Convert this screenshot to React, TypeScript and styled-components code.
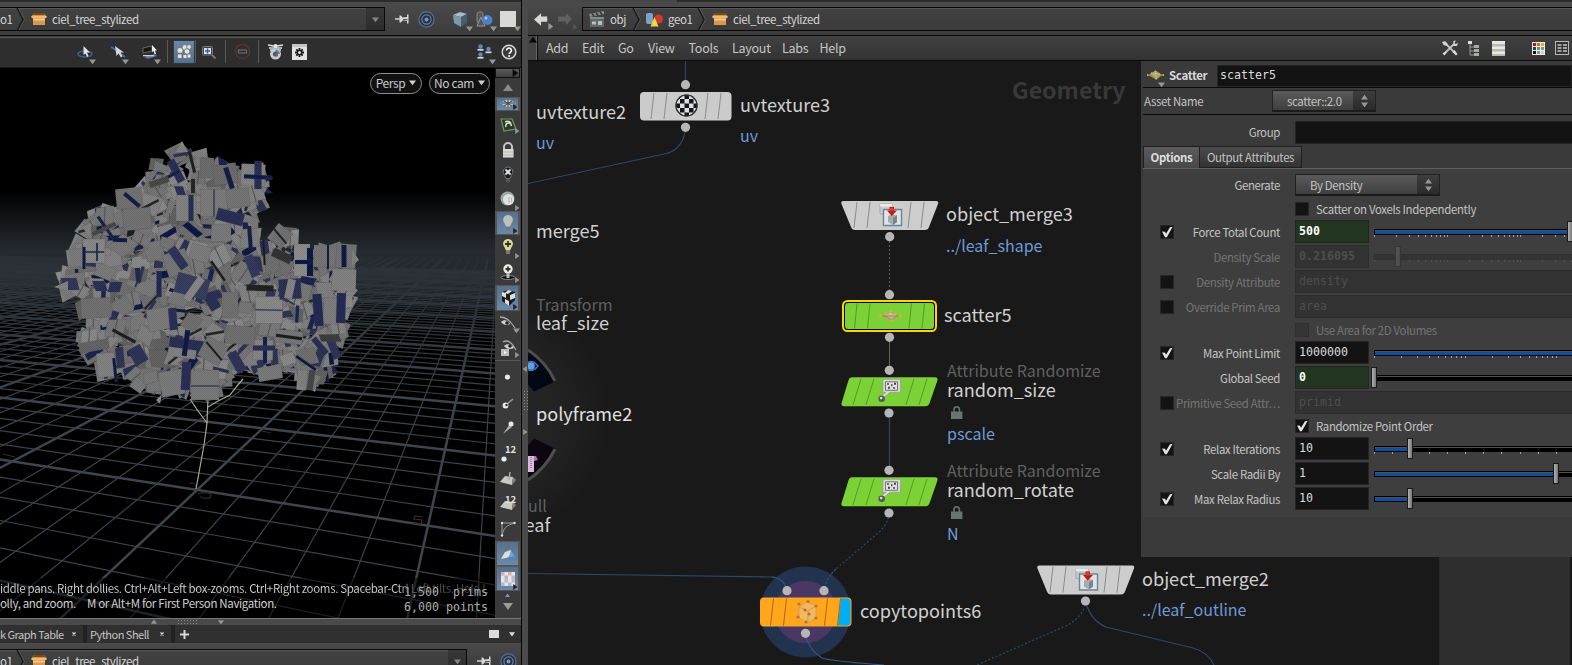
import React from "react";
import styled, { createGlobalStyle, css } from "styled-components";

const SANS = '"Noto Sans CJK SC", "Open Sans", sans-serif';
const MONO = '"DejaVu Sans Mono", "Liberation Mono", monospace';

const GlobalStyle = createGlobalStyle`
  * { box-sizing: border-box; }
  body { margin: 0; background: #3a3a3a; font-family: ${SANS}; font-size: 11.4px; letter-spacing: -0.33px; color: #c4c4c4; overflow: hidden; }
  svg { display: block; flex: none; }
`;

const Window = styled.div`
  width: 1572px;
  height: 665px;
  display: flex;
  overflow: hidden;
`;

/* ---------- shared chrome ---------- */

const TabStrip = styled.div<{ $from?: number }>`
  height: 2px;
  flex: none;
  background: #2b2b2b;
  margin-left: ${(p) => p.$from ?? 0}px;
`;

const PathBar = styled.div`
  height: 33px;
  flex: none;
  display: flex;
  align-items: center;
  padding-top: 1px;
  background: linear-gradient(#4a4a4a, #3c3c3c);
`;

const PathField = styled.div<{ $width?: number; $open?: boolean }>`
  height: 24px;
  display: flex;
  align-items: center;
  overflow: hidden;
  width: ${(p) => (p.$width ? `${p.$width}px` : "auto")};
  flex: ${(p) => (p.$width ? "none" : "1")};
  background: linear-gradient(#424242, #3b3b3b);
  border: 1px solid #080808;
  border-width: ${(p) => (p.$open ? "1px 0 1px 1px" : "1px 1px 1px 0")};
  box-shadow: inset 0 1px #555;
`;

const PathText = styled.span<{ $w?: number }>`
  line-height: 18px;
  margin-top: -1px;
  font-size: 11.500px;
  letter-spacing: -0.38px;
  color: #d6d6d6;
  white-space: nowrap;
  width: ${(p) => (p.$w ? `${p.$w}px` : "auto")};
`;

const FieldDrop = styled.div`
  width: 18px;
  height: 22px;
  margin-left: auto;
  display: grid;
  place-items: center;
  background: linear-gradient(#373737, #2c2c2c);
`;

const Chevron = () => (
  <svg width="9" height="23" viewBox="0 0 9 23">
    <path d="M1 0 7 11.500 1 23" fill="none" stroke="#151515" strokeWidth="1.3" />
    <path d="M2.500 0 8.500 11.500 2.500 23" fill="none" stroke="#5a5a5a" strokeWidth=".8" />
  </svg>
);

const Tri = ({ dir = "down", c = "#969696", s = 6 }: { dir?: string; c?: string; s?: number }) => {
  const rot: Record<string, number> = { down: 0, left: 90, up: 180, right: 270 };
  return (
    <svg width={s} height={s} viewBox="0 0 10 10">
      <path d="M0 2h10L5 9z" fill={c} transform={`rotate(${rot[dir]} 5 5)`} />
    </svg>
  );
};

const BoxIcon = () => (
  <svg width="16" height="14" viewBox="0 0 16 14">
    <path d="M3 1h10l3 4-2 1v7H2V6L0 5z" fill="#d9994a" />
    <path d="M3 1h10l1.500 2.500h-13z" fill="#7a4a12" />
    <path d="M2 7h12v1.500H2z" fill="#f4c987" />
    <path d="M0 5l2-1.500h12L16 5l-2 1.500H2z" fill="#edbb72" />
  </svg>
);

const PinIcon = () => (
  <svg width="15" height="14" viewBox="0 0 15 14">
    <path d="M0 7h6" stroke="#dcdcdc" strokeWidth="1.400" />
    <path d="M4.500 3.500h1.500l1.500 2 4.500-.5V2.500h1.500v9H12V9L7.500 8.500 6 10.500H4.500z" fill="#d8d8d8" />
    <path d="M8 7h4.500v1.200H8z" fill="#555" />
  </svg>
);

const TargetIcon = () => (
  <svg width="17" height="17" viewBox="0 0 17 17">
    <circle cx="8.500" cy="8.500" r="7.600" fill="#2c333f" stroke="#56719d" strokeWidth="1.200" />
    <circle cx="8.500" cy="8.500" r="4.600" fill="none" stroke="#6080ae" strokeWidth="1.200" />
    <circle cx="8.500" cy="8.500" r="1.900" fill="#7399d2" />
  </svg>
);

const IconSlot = styled.div<{ $w?: number; $h?: number; $lit?: boolean; $ml?: number }>`
  position: relative;
  width: ${(p) => p.$w ?? 24}px;
  height: ${(p) => p.$h ?? 24}px;
  margin-left: ${(p) => p.$ml ?? 0}px;
  flex: none;
  display: grid;
  place-items: center;
  ${(p) =>
    p.$lit &&
    css`
      background: linear-gradient(#6a87a6, #52718f);
      border: 1px solid #31363c;
    `}
`;

const Corner = styled.span<{ $x?: number; $y?: number }>`
  position: absolute;
  right: ${(p) => p.$x ?? 0}px;
  bottom: ${(p) => p.$y ?? 0}px;
`;

/* ---------- left pane ---------- */

const LeftPane = styled.div`
  width: 521px;
  flex: none;
  display: flex;
  flex-direction: column;
  background: #3a3a3a;
`;

const ViewToolbar = styled.div`
  height: 33px;
  flex: none;
  display: flex;
  align-items: center;
  padding-left: 73px;
  background: #2e2e2e;
  border-top: 1px solid #0c0c0c;
  border-bottom: 1px solid #1b1b1b;
  box-shadow: inset 0 1px #3a3a3a, inset 0 2px #5a5a5a;
`;

const Divider = styled.div<{ $ml: number; $mr: number }>`
  width: 1px;
  height: 23px;
  background: #5a5a5a;
  margin: 0 ${(p) => p.$mr}px 0 ${(p) => p.$ml}px;
`;

const ViewRow = styled.div`
  display: flex;
  height: 550px;
  flex: none;
`;

const Viewport = styled.div`
  position: relative;
  width: 495px;
  height: 550px;
  background: #000;
  overflow: hidden;
`;

const CameraPills = styled.div`
  position: absolute;
  top: 5px;
  right: 5px;
  display: flex;
  gap: 7px;
`;

const Pill = styled.div<{ $w: number }>`
  width: ${(p) => p.$w}px;
  height: 21px;
  padding-bottom: 2px;
  border: 1.500px solid #8e8e8e;
  border-radius: 11px;
  background: #111;
  display: flex;
  align-items: center;
  justify-content: center;
  gap: 4px;
  font-size: 12px;
  letter-spacing: -0.4px;
  line-height: 18px;
  white-space: nowrap;
  color: #c8c8c8;
`;

const HelpBand = styled.div`
  position: absolute;
  left: 0;
  right: 0;
  bottom: 0;
  height: 40px;
  background: rgba(0, 0, 0, 0.5);
  padding-top: 3px;
`;

const HelpLine = styled.div<{ $fade?: boolean }>`
  height: 15px;
  line-height: 15px;
  font-size: 11.500px;
  letter-spacing: -0.35px;
  white-space: pre;
  width: 488px;
  overflow: hidden;
  color: ${(p) => (p.$fade ? "transparent" : "#cfcfcf")};
  ${(p) =>
    p.$fade &&
    css`
      background: linear-gradient(90deg, #cfcfcf 398px, #555 410px, #3d3d3d);
      background-clip: text;
    `}
`;

const Stats = styled.div`
  position: absolute;
  right: 7px;
  bottom: 3px;
  text-align: right;
  font-family: ${MONO};
  font-size: 11.640px;
  line-height: 15px;
  letter-spacing: 0;
  color: #acacac;
  white-space: pre;
`;

const SideBar = styled.div`
  width: 26px;
  height: 550px;
  display: flex;
  flex-direction: column;
  align-items: stretch;
  background: #3a3a3a;
  border-right: 1px solid #444;
`;

const SideHead = styled.div`
  height: 10px;
  flex: none;
  display: flex;
  justify-content: flex-end;
  background: linear-gradient(#5c5c5c, #3e3e3e);
  border: 1px solid #111;
`;

const SideCell = styled.div<{ $h: number; $lit?: boolean; $line?: boolean }>`
  position: relative;
  height: ${(p) => p.$h}px;
  flex: none;
  display: grid;
  place-items: center;
  overflow: hidden;
  border-bottom: ${(p) => (p.$line ? "1px solid #585858" : "0")};
  ${(p) =>
    p.$lit &&
    css`
      border: 1px solid #555;
      border-width: 1px 2px 1px 2px;
      background: linear-gradient(#56708c, #6a89a8);
    `}
`;

const SplitH = styled.div`
  height: 7px;
  flex: none;
  background: #4a4a4a;
  border-top: 1px solid #777;
  display: flex;
  align-items: center;
  padding-left: 151px;
  gap: 20px;
`;

const Grip = styled.div<{ $w: number; $h: number }>`
  width: ${(p) => p.$w}px;
  height: ${(p) => p.$h}px;
  flex: none;
  background: radial-gradient(circle, #8a8a8a 0.8px, transparent 1px) 0 0 / 3px 3px;
`;

const TabBar = styled.div`
  height: 18px;
  flex: none;
  display: flex;
  align-items: center;
  background: #303030;
`;

const PaneTab = styled.div<{ $w: number; $pl: number; $pr: number }>`
  width: ${(p) => p.$w}px;
  height: 18px;
  padding: 0 ${(p) => p.$pr}px 0 ${(p) => p.$pl}px;
  display: flex;
  align-items: center;
  justify-content: space-between;
  font-size: 11px;
  letter-spacing: -0.5px;
  line-height: 18px;
  white-space: nowrap;
  border-right: 4px solid #222;
`;

const TabTail = styled.div`
  flex: 1;
  display: flex;
  align-items: center;
  justify-content: space-between;
  padding: 0 6px 0 5px;
`;

const TabTools = styled.div`
  display: flex;
  align-items: center;
  gap: 10px;
`;

const LowerPath = styled(PathBar)`
  height: 23px;
  align-items: flex-start;
  padding-top: 6px;
`;

/* Pseudo random generator so the foliage is identical on every render. */
const makeRandom = (seed: number) => () => {
  seed = (seed * 1664525 + 1013904223) % 4294967296;
  return seed / 4294967296;
};

const CROWN: [number, number][] = [
  [182, 145], [197, 150], [240, 160], [262, 162], [272, 176], [268, 200], [261, 212], [257, 237], [270, 240],
  [283, 224], [300, 238], [312, 245], [355, 244], [358, 275], [352, 310], [345, 350], [338, 370], [317, 390],
  [300, 388], [296, 374], [270, 382], [255, 382], [240, 376], [225, 384], [218, 400], [178, 402], [160, 396],
  [133, 396], [128, 378], [97, 379], [95, 363], [81, 360], [74, 330], [73, 310], [63, 296], [57, 286], [63, 274],
  [71, 262], [68, 252], [78, 238], [80, 225], [97, 208], [111, 206], [116, 190], [141, 188], [144, 168], [157, 149],
];

const inside = (x: number, y: number) => {
  let hit = false;
  for (let i = 0, j = CROWN.length - 1; i < CROWN.length; j = i++) {
    const [xi, yi] = CROWN[i];
    const [xj, yj] = CROWN[j];
    if (yi > y !== yj > y && x < ((xj - xi) * (y - yi)) / (yj - yi) + xi) hit = !hit;
  }
  return hit;
};

const GREYS = ["#787878", "#7d7d7d", "#828282", "#868686", "#727272", "#7a7a7a", "#8c8c8c", "#646464"];
const NAVY = ["#1b2552", "#2c3158", "#0e1a45", "#303459"];

interface Card { cx: number; cy: number; w: number; h: number; a: number; fill: string; k?: number }

const buildCards = (): Card[] => {
  const rnd = makeRandom(77);
  const out: Card[] = [];
  while (out.length < 1300) {
    const x = 55 + rnd() * 305;
    const y = 142 + rnd() * 262;
    const ok = [[8, 0], [-8, 0], [0, 8], [0, -8]].every(([dx, dy]) => inside(x + dx, y + dy));
    if (!ok) continue;
    const a = (rnd() - 0.5) * 70;
    const s = 13 + rnd() * 8;
    const k = (rnd() - 0.5) * 36;
    out.push({ cx: x, cy: y, w: s, h: s * (0.7 + rnd() * 0.35), a, k, fill: GREYS[Math.floor(rnd() * 8)] });
    const r = rnd();
    if (r < 0.3) out.push({ cx: x + 2, cy: y, w: 3 + rnd() * 6, h: s * (0.7 + rnd() * 0.4), a: a + (r < 0.12 ? 90 : 0), k: k * 1.4, fill: NAVY[Math.floor(rnd() * 4)] });
    else if (r < 0.35) out.push({ cx: x, cy: y, w: 2.5, h: s, a: a + 45, fill: "#262626" });
    else if (r < 0.6) out.push({ cx: x, cy: y, w: 0.8, h: s, a, k, fill: "#595959" });
  }
  return out;
};

const CARDS = buildCards();

/* Foreground leaf cards, which face the camera. */
const FRONT: Card[] = [
  { cx: 186, cy: 208, w: 20, h: 26, a: 0, fill: "#848484" }, { cx: 191, cy: 208, w: 5, h: 26, a: 0, fill: "#282f58" },
  { cx: 214, cy: 203, w: 27, h: 27, a: 0, fill: "#7e7e7e" }, { cx: 214, cy: 203, w: 1.2, h: 27, a: 0, fill: "#2c3158" },
  { cx: 238, cy: 198, w: 23, h: 19, a: -6, fill: "#777" }, { cx: 230, cy: 217, w: 27, h: 12, a: 15, fill: "#2b3058" },
  { cx: 207, cy: 168, w: 14, h: 20, a: 0, fill: "#6f6f6f" }, { cx: 192, cy: 162, w: 3, h: 22, a: -14, fill: "#1f1f1f" },
  { cx: 193, cy: 186, w: 4, h: 14, a: 0, fill: "#262626" }, { cx: 176, cy: 171, w: 8, h: 24, a: -28, fill: "#2b3058" },
  { cx: 170, cy: 176, w: 22, h: 3, a: -28, fill: "#141f4c" }, { cx: 159, cy: 182, w: 20, h: 6, a: -18, fill: "#4c4c46" },
  { cx: 253, cy: 175, w: 24, h: 22, a: 3, fill: "#878787" }, { cx: 258, cy: 175, w: 7, h: 28, a: 0, fill: "#292f58" },
  { cx: 258, cy: 177, w: 28, h: 4, a: 3, fill: "#101c4a" }, { cx: 225, cy: 174, w: 24, h: 20, a: -8, fill: "#6e6e6e" },
  { cx: 229, cy: 178, w: 5, h: 22, a: -18, fill: "#121d49" }, { cx: 129, cy: 198, w: 26, h: 20, a: -6, fill: "#747474" },
  { cx: 132, cy: 200, w: 4, h: 20, a: -50, fill: "#131e4c" }, { cx: 137, cy: 219, w: 28, h: 21, a: -6, fill: "#757575" },
  { cx: 94, cy: 251, w: 22, h: 24, a: 0, fill: "#8b8b8b" }, { cx: 97, cy: 252, w: 1.6, h: 18, a: 0, fill: "#101c4a" },
  { cx: 93, cy: 252, w: 22, h: 1.4, a: 0, fill: "#101c4a" }, { cx: 106, cy: 228, w: 3, h: 28, a: -35, fill: "#17224e" },
  { cx: 104, cy: 229, w: 25, h: 4, a: -25, fill: "#4a4a4a" }, { cx: 76, cy: 258, w: 18, h: 18, a: -8, fill: "#7e7e7e" },
  { cx: 84, cy: 258, w: 3, h: 22, a: 0, fill: "#101b46" }, { cx: 120, cy: 240, w: 14, h: 4, a: 2, fill: "#101b46" },
  { cx: 70, cy: 284, w: 16, h: 12, a: 0, k: 14, fill: "#34385c" }, { cx: 100, cy: 286, w: 12, h: 10, a: 0, k: 20, fill: "#2d3258" },
  { cx: 115, cy: 287, w: 12, h: 10, a: 0, k: -14, fill: "#2d3258" }, { cx: 138, cy: 275, w: 5, h: 14, a: -6, fill: "#222a54" },
  { cx: 159, cy: 284, w: 5, h: 26, a: 0, fill: "#232a55" }, { cx: 150, cy: 309, w: 3, h: 20, a: 32, fill: "#2d3258" },
  { cx: 96, cy: 308, w: 30, h: 20, a: -3, fill: "#737373" }, { cx: 94, cy: 346, w: 30, h: 10, a: -10, fill: "#666" },
  { cx: 200, cy: 253, w: 20, h: 16, a: 15, fill: "#7f7f7f" }, { cx: 177, cy: 263, w: 24, h: 24, a: -18, fill: "#797979" },
  { cx: 178, cy: 258, w: 9, h: 24, a: -35, fill: "#30345c" }, { cx: 192, cy: 286, w: 33, h: 20, a: 15, fill: "#3a3e60" },
  { cx: 194, cy: 289, w: 8, h: 27, a: 35, fill: "#8a8a8a" }, { cx: 252, cy: 266, w: 9, h: 22, a: -22, fill: "#343a60" },
  { cx: 218, cy: 271, w: 2.500, h: 24, a: -35, fill: "#1e1e1e" }, { cx: 213, cy: 303, w: 11, h: 14, a: -30, fill: "#2a3058" },
  { cx: 260, cy: 288, w: 27, h: 6, a: 2, fill: "#232323" }, { cx: 269, cy: 310, w: 27, h: 27, a: 0, fill: "#8c8c8c" },
  { cx: 269, cy: 310, w: 27, h: 1.2, a: 1, fill: "#1c2858" }, { cx: 290, cy: 289, w: 22, h: 20, a: -4, fill: "#2d3258" },
  { cx: 290, cy: 289, w: 8, h: 20, a: 12, fill: "#888" }, { cx: 328, cy: 256, w: 28, h: 22, a: 0, fill: "#787878" },
  { cx: 346, cy: 256, w: 20, h: 24, a: 4, fill: "#767676" }, { cx: 344, cy: 256, w: 5, h: 22, a: 0, fill: "#101b46" },
  { cx: 328, cy: 257, w: 2, h: 24, a: 0, fill: "#101b46" }, { cx: 302, cy: 260, w: 16, h: 32, a: 0, fill: "#909090" },
  { cx: 310, cy: 262, w: 6, h: 28, a: 0, fill: "#0c1946" }, { cx: 303, cy: 262, w: 16, h: 4, a: 0, fill: "#0c1946" },
  { cx: 331, cy: 311, w: 15, h: 26, a: 2, fill: "#808080" }, { cx: 341, cy: 308, w: 9, h: 30, a: 2, fill: "#252c58" },
  { cx: 318, cy: 310, w: 9, h: 32, a: -4, fill: "#242b56" }, { cx: 344, cy: 280, w: 24, h: 22, a: 2, fill: "#858585" },
  { cx: 250, cy: 238, w: 4, h: 24, a: -4, fill: "#141f4c" }, { cx: 264, cy: 252, w: 2, h: 26, a: -3, fill: "#1c1c1c" },
  { cx: 280, cy: 236, w: 18, h: 19, a: 38, fill: "#737373" }, { cx: 280, cy: 236, w: 2, h: 20, a: -40, fill: "#222" },
  { cx: 282, cy: 256, w: 20, h: 9, a: 25, fill: "#343434" }, { cx: 160, cy: 319, w: 25, h: 22, a: -10, fill: "#7e7e7e" },
  { cx: 173, cy: 319, w: 8, h: 22, a: -5, fill: "#2b3058" }, { cx: 186, cy: 347, w: 34, h: 16, a: 8, fill: "#2a3056" },
  { cx: 182, cy: 353, w: 28, h: 9, a: 8, fill: "#858585" }, { cx: 186, cy: 343, w: 5, h: 26, a: 8, fill: "#101b46" },
  { cx: 138, cy: 355, w: 14, h: 18, a: -30, fill: "#30345a" }, { cx: 124, cy: 336, w: 26, h: 3, a: 28, fill: "#1d1d1d" },
  { cx: 213, cy: 351, w: 24, h: 22, a: 28, fill: "#767676" }, { cx: 214, cy: 351, w: 2, h: 24, a: -40, fill: "#1e1e1e" },
  { cx: 205, cy: 385, w: 28, h: 30, a: 0, fill: "#7c7c7c" }, { cx: 205, cy: 386, w: 28, h: 1.2, a: 0, fill: "#2b3465" },
  { cx: 172, cy: 383, w: 24, h: 25, a: -10, fill: "#7d7d7d" }, { cx: 186, cy: 376, w: 9, h: 28, a: 3, fill: "#2b2f58" },
  { cx: 106, cy: 365, w: 18, h: 24, a: -4, fill: "#858585" }, { cx: 115, cy: 370, w: 3, h: 24, a: -6, fill: "#101b46" },
  { cx: 302, cy: 380, w: 10, h: 20, a: 4, fill: "#838383" }, { cx: 311, cy: 380, w: 6, h: 20, a: 8, fill: "#484848" },
  { cx: 306, cy: 363, w: 24, h: 3, a: 35, fill: "#101b46" }, { cx: 320, cy: 346, w: 6, h: 20, a: -40, fill: "#2b3058" },
  { cx: 334, cy: 349, w: 8, h: 20, a: -22, fill: "#30345a" }, { cx: 330, cy: 338, w: 20, h: 7, a: 0, k: 20, fill: "#3e3e3e" },
  { cx: 237, cy: 362, w: 10, h: 22, a: -30, fill: "#30345a" },
  { cx: 263, cy: 350, w: 20, h: 20, a: 2, fill: "#888" }, { cx: 265, cy: 350, w: 4, h: 26, a: 0, fill: "#13204f" },
  { cx: 264, cy: 348, w: 22, h: 5, a: 0, fill: "#2b3058" }, { cx: 289, cy: 337, w: 27, h: 13, a: 6, fill: "#7a7a7a" },
  { cx: 289, cy: 337, w: 26, h: 3, a: 8, fill: "#1b1b1b" }, { cx: 270, cy: 373, w: 24, h: 14, a: -10, fill: "#7c7c7c" },
  { cx: 240, cy: 335, w: 30, h: 18, a: 4, fill: "#727272" }, { cx: 230, cy: 305, w: 16, h: 26, a: 0, fill: "#747474" },
];

const gridLines = () => {
  const hx = 500, hy = 205, vx = -1650;
  const lines: { x1: number; y1: number; x2: number; y2: number; major: boolean }[] = [];
  for (let k = -60; k <= 40; k++) {
    const x = 197 + 47.8 * k;
    const t1 = (258 - hy) / 285;
    const t2 = (625 - hy) / 285;
    lines.push({ x1: hx + (x - hx) * t1, y1: 258, x2: hx + (x - hx) * t2, y2: 625, major: k % 5 === 0 });
  }
  for (let k = -9; k <= 62; k++) {
    const u = 1 / (0.003509 + 0.000194 * k);
    const px = hx - 1.063 * u;
    const m = u / (px - vx);
    lines.push({ x1: 0, y1: hy + m * -vx, x2: 495, y2: hy + m * (495 - vx), major: k % 5 === 0 });
  }
  return lines;
};

const GRID = gridLines();

const Scene = () => (
  <svg width="495" height="550" viewBox="0 68 495 550">
    <defs>
      <linearGradient id="haze" x1="0" y1="0" x2="0" y2="1">
        <stop offset="0" stopColor="#2b3036" stopOpacity="0" />
        <stop offset=".5" stopColor="#2b3036" stopOpacity=".9" />
        <stop offset=".65" stopColor="#2b3036" stopOpacity=".85" />
        <stop offset="1" stopColor="#2b3036" stopOpacity="0" />
      </linearGradient>
      <linearGradient id="fade" x1="0" y1="255" x2="0" y2="400" gradientUnits="userSpaceOnUse">
        <stop offset="0" stopColor="#fff" stopOpacity=".15" />
        <stop offset=".3" stopColor="#fff" stopOpacity=".7" />
        <stop offset="1" stopColor="#fff" />
      </linearGradient>
      <mask id="gridMask" maskUnits="userSpaceOnUse" x="0" y="255" width="495" height="365">
        <rect x="0" y="255" width="495" height="365" fill="url(#fade)" />
      </mask>
      <pattern id="weave" width="2" height="2" patternUnits="userSpaceOnUse">
        <rect width="1" height="1" fill="#000" opacity=".1" />
        <rect x="1" y="1" width="1" height="1" fill="#000" opacity=".1" />
      </pattern>
    </defs>
    <rect x="0" y="190" width="495" height="125" fill="url(#haze)" />
    <g mask="url(#gridMask)">
      {GRID.map((l, i) => (
        <line key={i} x1={l.x1} y1={l.y1} x2={l.x2} y2={l.y2} stroke={l.major ? "#3d464f" : "#3b434b"} strokeWidth={l.major ? 2.5 : 1.2} />
      ))}
    </g>
    <g fill="none" stroke="#a9a996" strokeWidth="1.200">
      <path d="M196 489 204 445 207 423 208 398" />
      <path d="M207 423 198 411 190 399" />
      <path d="M208 407 218 401 230 395 237 386 243 379" />
    </g>
    <path d="M189 484c3-3 8 0 6 3M262 431l9 2" stroke="#3a2a2a" fill="none" />
    <path d="M198 494c5-2 14-2 13 2s-10 2-11 0" stroke="#23232c" fill="none" strokeWidth="1.500" />
    <path d="M423 517l-8-1-1 3 8 1-1 4-8-1M3 454l12 3" stroke="#3c2a2b" fill="none" strokeWidth="1.200" />
    <g>
      {[...CARDS, ...FRONT].map((c, i) => (
        <rect
          key={i}
          x={-c.w / 2}
          y={-c.h / 2}
          width={c.w}
          height={c.h}
          fill={c.fill}
          stroke="#4b4b4b"
          strokeOpacity=".4"
          strokeWidth=".5"
          transform={`translate(${c.cx} ${c.cy}) rotate(${c.a}) skewX(${c.k ?? 0})`}
        />
      ))}
    </g>
    <g fill="#858585">
      <path d="M176 152 182 141 188 152zM54 287 68 281 68 291zM352 250 359 260 352 266zM156 400 160 404 162 394z" />
    </g>
    <path d="M218 155l9 10-8 0zM265 176l9 2-8 4zM267 188l6 5-8 1z" fill="#1a2552" />
    <clipPath id="crown"><polygon points={CROWN.map((p) => p.join(",")).join(" ")} /></clipPath>
    <rect x="50" y="140" width="312" height="266" fill="url(#weave)" clipPath="url(#crown)" />
  </svg>
);

const ViewTools = () => (
  <ViewToolbar>
    <IconSlot>
      <svg width="18" height="18" viewBox="0 0 18 18">
        <ellipse cx="9" cy="11" rx="7" ry="3" fill="none" stroke="#3f5f90" strokeWidth="1.600" />
        <path d="M7.500 3v9l2-1.500 1.500 3.500 1.500-1-1.500-3.500H14z" fill="#e0e0e0" />
      </svg>
      <Corner $x={1} $y={-1}><Tri s={7} /></Corner>
    </IconSlot>
    <IconSlot $ml={9}>
      <svg width="18" height="18" viewBox="0 0 18 18">
        <path d="M2 4l5 3 5 4 4 3" fill="none" stroke="#456ba5" strokeWidth="2" />
        <path d="M6 3l1.500 10 2-2.500 2.500 4 1.500-1-2-4H15z" fill="#d6d6d6" />
      </svg>
      <Corner $x={1} $y={-1}><Tri s={7} /></Corner>
    </IconSlot>
    <IconSlot $ml={8}>
      <svg width="18" height="18" viewBox="0 0 18 18">
        <path d="M2 5l9-2v5L2 10z" fill="#171717" stroke="#777" strokeWidth=".8" />
        <path d="M3 14l11-3 2 2-9 3z" fill="#4f76ad" />
        <path d="M2 12h11v1.300H2z" fill="#ccc" />
        <path d="M11 2v7l1.500-1 1 3h1.500l-1-3.500h2z" fill="#eee" />
      </svg>
      <Corner $x={1} $y={-1}><Tri s={7} /></Corner>
    </IconSlot>
    <Divider $ml={5} $mr={5} />
    <IconSlot $w={22} $lit>
      <svg width="16" height="18" viewBox="0 0 16 18" fill="#e4e4dc" stroke="#5a6470" strokeWidth=".7">
        <circle cx="9" cy="4.500" r="2.900" /><circle cx="13" cy="4" r="2.400" /><circle cx="4" cy="7.500" r="3" />
        <circle cx="11" cy="8.500" r="2.800" /><path d="M1.500 11h4.500v4.500H1.500zM7 11.500h4v4H7z" /><circle cx="13" cy="13" r="2.200" />
      </svg>
    </IconSlot>
    <Divider $ml={0} $mr={0} />
    <IconSlot $ml={1}>
      <svg width="16" height="14" viewBox="0 0 16 14">
        <rect x="1.500" y="1.500" width="10" height="8.500" rx="1" fill="#40444c" stroke="#777" />
        <path d="M3 3h7v6H3z" fill="#d4dff2" />
        <path d="M6.500 3.500v5M4 6h5" stroke="#35599b" strokeWidth="1.300" />
        <path d="M11 10l3.500 3.500" stroke="#777" strokeWidth="1.800" />
      </svg>
    </IconSlot>
    <Divider $ml={4} $mr={4} />
    <IconSlot>
      <svg width="17" height="17" viewBox="0 0 17 17">
        <circle cx="8.500" cy="8.500" r="7.100" fill="none" stroke="#5a3331" strokeWidth="1.500" />
        <rect x="4.500" y="7" width="8" height="3" fill="none" stroke="#707070" strokeWidth="1.100" />
      </svg>
    </IconSlot>
    <Divider $ml={4} $mr={4} />
    <IconSlot>
      <svg width="17" height="17" viewBox="0 0 17 17">
        <path d="M1 2l6 1M16 2l-6 1M2 5h13M3 7l11 0" stroke="#ddd" strokeWidth="1.300" />
        <circle cx="8.500" cy="3" r="2" fill="#e6e6e6" />
        <circle cx="8.500" cy="11" r="5.500" fill="#c8cecf" />
        <path d="M8.500 11V6.500a4.500 4.500 0 014.500 4.500z" fill="#5b8fae" />
        <circle cx="8.500" cy="11" r="2.600" fill="#36628c" /><circle cx="9.500" cy="12" r="1.500" fill="#bb4a3c" />
      </svg>
    </IconSlot>
    <IconSlot>
      <svg width="15" height="16" viewBox="0 0 15 16">
        <path d="M0 0h15v16H0z" fill="#e2e2e2" /><path d="M0 0h15v3H0z" fill="#c5c5c5" />
        <path d="M7.500 4v9M3 8.500h9M4.300 5.300l6.400 6.400M10.700 5.300l-6.400 6.400" stroke="#141414" strokeWidth="1.800" />
        <circle cx="7.500" cy="8.500" r="1.500" fill="#e2e2e2" />
      </svg>
    </IconSlot>
    <IconSlot $ml={162}>
      <svg width="16" height="16" viewBox="0 0 16 16">
        {[[3, 2.5], [11, 5], [3, 10.5]].map(([x, y]) => (
          <g key={`${x}${y}`}>
            <circle cx={x + 0.5} cy={y} r="2.200" fill="#5d86c6" />
            <path d={`M${x - 2.5} ${y + 3.3}h6`} stroke="#c9d4e6" strokeWidth="1.800" />
          </g>
        ))}
      </svg>
      <Corner $x={1} $y={-1}><Tri s={7} /></Corner>
    </IconSlot>
    <IconSlot>
      <svg width="16" height="16" viewBox="0 0 16 16">
        <circle cx="8" cy="8" r="6.800" fill="#3a3a3a" stroke="#d8d8d8" strokeWidth="1.500" />
        <path d="M5.600 6.400a2.400 2.400 0 114 1.800c-1 .7-1.500 1-1.500 1.900" fill="none" stroke="#fff" strokeWidth="1.600" />
        <circle cx="8.100" cy="12" r="1" fill="#fff" />
      </svg>
    </IconSlot>
  </ViewToolbar>
);

const Bulb = ({ c, mark, neck = "#777" }: { c: string; mark?: string; neck?: string }) => (
  <svg width="12" height="18" viewBox="0 0 12 18">
    <path d="M6 1a4.800 4.800 0 013.600 8L8 12.500H4L2.400 9A4.800 4.800 0 016 1z" fill={c} stroke={mark === "x" ? "#6b7275" : "none"} />
    <path d="M4 13h4v3H4z" fill={neck} />
    {mark === "plus" && <path d="M6 3v6M3 6h6" stroke="#333" strokeWidth="1.800" />}
    {mark === "x" && <path d="M3.500 3.500l5 5M8.500 3.500l-5 5" stroke="#e8e8e8" strokeWidth="1.800" />}
  </svg>
);

const PlaneGlyph = () => (
  <>
    <path d="M6 6l8 1-1 8L1 12z" fill="#c9c9c4" /><path d="M14 7l3 3-4 5z" fill="#85857f" />
  </>
);

const S: React.FC<{ children: React.ReactNode }> = ({ children }) => (
  <svg width="18" height="18" viewBox="0 0 18 18">{children}</svg>
);

const NumMark = styled.span`
  position: absolute;
  top: 3px;
  left: 10px;
  font-size: 9.500px;
  line-height: 10px;
  letter-spacing: 0;
  font-weight: 700;
  color: #e0e0e0;
`;

const Side = () => (
  <SideBar>
    <SideHead><Tri dir="right" c="#080808" s={8} /></SideHead>
    <SideCell $h={19}><Tri dir="up" s={10} c="#8a8a8a" /></SideCell>
    <SideCell $h={14} $lit>
      <svg width="16" height="10" viewBox="0 0 16 10">
        <path d="M8 0l8 4-8 5-8-5z" fill="#b9c0c2" /><path d="M4 2l8 5M12 2L4 7M8 0v9M1 4h14" stroke="#444" />
      </svg>
      <Corner $y={0}><Tri dir="right" s={6} c="#222" /></Corner>
    </SideCell>
    <SideCell $h={26}>
      <S><path d="M2 4h11l4 10-12 2z" fill="#2a3a26" stroke="#6f9b5a" strokeWidth="1.200" /><path d="M6 7q3-2 6 1M7 12q-1-4 3-4 3 1 2 3" fill="none" stroke="#dcdcdc" strokeWidth="1.500" /></S>
      <Corner $y={3}><Tri dir="right" s={6} /></Corner>
    </SideCell>
    <SideCell $h={25}>
      <S><path d="M5 9V6a4 4 0 018 0V9" fill="none" stroke="#c6c6c6" strokeWidth="2" /><path d="M4 8h10.500v8.500H4z" fill="#deded8" /><path d="M4 11h10.500M4 14h10.500" stroke="#b5b5ae" /></S>
    </SideCell>
    <SideCell $h={25}><Bulb c="#1b1e20" mark="x" neck="#555" /></SideCell>
    <SideCell $h={24}>
      <S><circle cx="8.500" cy="8.500" r="7" fill="#9ba5a5" /><circle cx="9.500" cy="9.500" r="5.500" fill="#e0e3df" /><path d="M10 7v6M12.500 7.500v5" stroke="#b5baba" strokeWidth="1.200" /></S>
      <Corner $y={0}><Tri dir="right" s={6} /></Corner>
    </SideCell>
    <SideCell $h={24} $lit><Bulb c="#bfc0bc" /><Corner $y={0}><Tri dir="right" s={6} c="#222" /></Corner></SideCell>
    <SideCell $h={24}><Bulb c="#d8dc8e" mark="plus" /><Corner $y={0}><Tri dir="right" s={6} /></Corner></SideCell>
    <SideCell $h={26}>
      <S><ellipse cx="9" cy="14.500" rx="7" ry="2" fill="#111" stroke="#888" /><circle cx="9" cy="6" r="4.700" fill="#eceee0" /><path d="M9 3.500v5M6.500 6h5" stroke="#333" strokeWidth="1.800" /><path d="M7.500 10h3v5h-3z" fill="#bbb" /></S>
      <Corner $y={2}><Tri dir="right" s={6} /></Corner>
    </SideCell>
    <SideCell $h={26} $lit>
      <S><path d="M3 3l6-2 7 2v8l-6 6-7-5z" fill="#1c1c1c" /><path d="M3 3l4 1v5l-4-2zM9 1l4 1-4 3-3-1zM11 6l5-2v5l-5 2zM6 10l4 2v5l-4-3z" fill="#dedede" /></S>
      <Corner $y={0}><Tri dir="right" s={6} c="#222" /></Corner>
    </SideCell>
    <SideCell $h={24}>
      <S><path d="M1 3c5 0 9 2 15 11" fill="none" stroke="#a9a9a9" strokeWidth="1.300" /><path d="M2 8c3-3 7-2 9 2-3 2-7 1-9-2z" fill="#d0d0d0" /><circle cx="8" cy="9" r="1.800" fill="#222" /></S>
      <Corner $y={1}><Tri s={7} /></Corner>
    </SideCell>
    <SideCell $h={26} $line>
      <S><path d="M4 3c5-3 9 1 13 8" fill="none" stroke="#a9a9a9" strokeWidth="1.300" /><path d="M5 7c3-3 8-2 10 2-4 2-8 1-10-2z" fill="#d0d0d0" /><circle cx="11" cy="7" r="1.800" fill="#222" /><path d="M2 10h8v7H2z" fill="#bcbcbc" /><path d="M5 11.500l3 2-3 2z" fill="#eee" /></S>
      <Corner $y={2}><Tri dir="right" s={6} /></Corner>
    </SideCell>
    <SideCell $h={29}><S><circle cx="8.500" cy="10" r="2.600" fill="#e8ece6" /></S></SideCell>
    <SideCell $h={25}><S><path d="M8 10l6-5" stroke="#999" strokeWidth="1.500" /><circle cx="6.500" cy="11.500" r="2.900" fill="#e8ece6" /><circle cx="7.500" cy="11" r="1.200" fill="#333" /></S></SideCell>
    <SideCell $h={26}><S><path d="M4 15l6-9 3 2z" fill="#aaa" /><circle cx="12" cy="5" r="2.500" fill="#e8ece6" /></S></SideCell>
    <SideCell $h={25}><S><circle cx="5" cy="14" r="2.600" fill="#e8ece6" /></S><NumMark>12</NumMark></SideCell>
    <SideCell $h={25}><S><PlaneGlyph /><path d="M10 10l1-8" stroke="#aaa" strokeWidth="1.500" /></S></SideCell>
    <SideCell $h={25}><S><PlaneGlyph /></S><NumMark>12</NumMark></SideCell>
    <SideCell $h={25}><S><path d="M3 16V3h13M3 16C4 9 7 5 16 3" fill="none" stroke="#9c9c9c" /><circle cx="3" cy="3" r="1.200" fill="#ddd" /><circle cx="15.500" cy="3" r="1.200" fill="#ddd" /><circle cx="3" cy="15.500" r="1.200" fill="#ddd" /></S></SideCell>
    <SideCell $h={25} $lit><S><path d="M11 4l5 8-5 2z" fill="#6da4e2" /><path d="M8 13l8-2-5 4z" fill="#4c82c4" /><path d="M2 14l4-7 6-2-2 7-3 1z" fill="#e0e0d6" /></S></SideCell>
    <SideCell $h={25} $lit>
      <S>
        <path d="M2 2h14v14H2z" fill="#e6e6e4" />
        <path d="M2 2h3.500v3.500H2zM9 2h3.500v3.500H9zM5.500 9H9v3.500H5.500zM12.500 9H16v3.500h-3.500z" fill="#deaeab" />
        <path d="M5.500 5.500H9V9H5.500zM12.500 5.500H16V9h-3.500zM2 12.500h3.500V16H2zM9 12.500h3.500V16H9z" fill="#a9bcd6" />
      </S>
      <Corner $y={0}><Tri dir="right" s={6} c="#222" /></Corner>
    </SideCell>
    <SideCell $h={8}><Tri dir="up" s={5} c="#6c98cf" /></SideCell>
    <SideCell $h={14}><Tri s={10} c="#9b9b9b" /></SideCell>
  </SideBar>
);

const Row = styled.div<{ $gap?: number; $pl?: number }>`
  display: flex;
  align-items: center;
  gap: ${(p) => p.$gap ?? 0}px;
  padding-left: ${(p) => p.$pl ?? 0}px;
`;

const PathCrumbs = () => (
  <Row>
    <PathText $w={16}>o1</PathText>
    <Chevron />
    <Row $gap={5} $pl={6}>
      <BoxIcon />
      <PathText>ciel_tree_stylized</PathText>
    </Row>
  </Row>
);

const CloseMark = () => (
  <svg width="4" height="4"><path d="M.5.5l3 3M3.500.5l-3 3" stroke="#ddd" strokeWidth="1.300" /></svg>
);

const Left = () => (
  <LeftPane>
    <TabStrip />
    <PathBar>
      <PathField $width={385}>
        <PathCrumbs />
        <FieldDrop><Tri s={7} c="#858585" /></FieldDrop>
      </PathField>
      <IconSlot $ml={5}><PinIcon /></IconSlot>
      <IconSlot $w={24}><TargetIcon /></IconSlot>
      <IconSlot $ml={10}>
        <svg width="14" height="15" viewBox="0 0 14 15">
          <path d="M0 3l7-3 7 2-6 3z" fill="#a9bdc8" /><path d="M0 3l8 2v10l-7-4z" fill="#7d98a8" /><path d="M8 5l6-3v9l-6 4z" fill="#465d6c" />
        </svg>
        <Corner $x={-1} $y={-1}><Tri s={7} /></Corner>
      </IconSlot>
      <IconSlot>
        <svg width="17" height="17" viewBox="0 0 17 17">
          <rect x="1" y="1" width="6" height="11" rx="2" fill="#555" stroke="#888" /><path d="M5 6l4 9H1z" fill="#555" stroke="#999" /><circle cx="11.500" cy="9" r="5" fill="#4d80c4" /><circle cx="10" cy="7" r="1.500" fill="#a8c8ee" />
        </svg>
        <Corner $x={-1} $y={-1}><Tri s={7} /></Corner>
      </IconSlot>
      <IconSlot>
        <svg width="16" height="16"><path d="M0 0h16v16H0z" fill="#d9d9d5" /></svg>
        <Corner $x={-1} $y={-1}><Tri s={7} /></Corner>
      </IconSlot>
    </PathBar>
    <ViewTools />
    <ViewRow>
      <Viewport>
        <Scene />
        <CameraPills>
          <Pill $w={52}>Persp <Tri c="#d0d0d0" s={7} /></Pill>
          <Pill $w={61}>No cam <Tri c="#d0d0d0" s={7} /></Pill>
        </CameraPills>
        <HelpBand>
          <HelpLine $fade>iddle pans. Right dollies. Ctrl+Alt+Left box-zooms. Ctrl+Right zooms. Spacebar-Ctrl Left tilts. Hold L</HelpLine>
          <HelpLine>{"olly, and zoom.     M or Alt+M for First Person Navigation."}</HelpLine>
        </HelpBand>
        <Stats>{"1,500  prims\n6,000 points"}</Stats>
      </Viewport>
      <Side />
    </ViewRow>
    <SplitH><Tri dir="up" s={6} /><Grip $w={21} $h={6} /><Tri s={6} /></SplitH>
    <TabBar>
      <PaneTab $w={87} $pl={0} $pr={7}>k Graph Table <CloseMark /></PaneTab>
      <PaneTab $w={88} $pl={3} $pr={7}>Python Shell <CloseMark /></PaneTab>
      <TabTail>
        <svg width="9" height="9"><path d="M4.500 0v9M0 4.500h9" stroke="#d8d8d8" strokeWidth="2" /></svg>
        <TabTools><svg width="10" height="8"><path d="M0 0h10v8H0z" fill="#dcdcdc" /></svg><Tri c="#e0e0e0" s={6} /></TabTools>
      </TabTail>
    </TabBar>
    <LowerPath>
      <PathField $width={467}>
        <PathCrumbs />
        <FieldDrop><Tri s={7} c="#858585" /></FieldDrop>
      </PathField>
      <IconSlot $ml={5}><PinIcon /></IconSlot>
      <IconSlot $w={24}><TargetIcon /></IconSlot>
    </LowerPath>
  </LeftPane>
);

const SplitV = styled.div`
  width: 7px;
  flex: none;
  background: #4a4a4a;
  border-left: 1px solid #050505;
  display: flex;
  flex-direction: column;
  align-items: center;
  padding-top: 366px;
  gap: 18px;
`;

/* ---------- right pane ---------- */

const RightPane = styled.div`
  width: 1044px;
  flex: none;
  display: flex;
  flex-direction: column;
  background: #474747;
`;

const MenuBar = styled.div`
  height: 26px;
  flex: none;
  display: flex;
  align-items: center;
  background: linear-gradient(#414141, #333);
  border-top: 1px solid #0a0a0a;
  border-bottom: 1px solid #0a0a0a;
`;

const MenuHandle = styled.div`
  width: 10px;
  height: 24px;
  padding-left: 1px;
  background: #444;
  border-right: 1px solid #0a0a0a;
  box-shadow: inset -1px 0 #666;
`;

const MenuItem = styled.span<{ $w: number }>`
  width: ${(p) => p.$w}px;
  font-size: 12.500px;
  letter-spacing: -0.25px;
  line-height: 20px;
  color: #c6c6c6;
`;

const MenuTools = styled.div`
  display: flex;
  align-items: center;
  margin-left: auto;
  margin-right: -2px;
`;

const Network = styled.div`
  position: relative;
  height: 604px;
  background: #191919;
  overflow: hidden;
`;

const Backdrop = styled.div`
  position: absolute;
  left: 911px;
  top: 494px;
  width: 131px;
  height: 110px;
  background: #2e2e2e;
  border-left: 1px solid #262626;
`;

type LabelKind = "name" | "type" | "note" | "context";

const labelColor: Record<LabelKind, string> = { name: "#d0d0d0", type: "#606060", note: "#6f9ad6", context: "#383838" };
const labelSize: Record<LabelKind, number> = { name: 18.1, type: 16, note: 16, context: 23.2 };

const Label = styled.span<{ $x: number; $base: number; $kind: LabelKind; $bright?: boolean }>`
  position: absolute;
  left: ${(p) => p.$x - 528}px;
  top: ${(p) => p.$base - 61 - 9 - labelSize[p.$kind] * 0.436}px;
  line-height: 18px;
  letter-spacing: 0;
  font-size: ${(p) => labelSize[p.$kind]}px;
  font-weight: ${(p) => (p.$kind === "context" ? 700 : 400)};
  color: ${(p) => (p.$bright ? "#e0e0e0" : labelColor[p.$kind])};
  white-space: nowrap;
`;

const LABELS: [string, number, number, LabelKind][] = [
  ["uvtexture2", 536, 118.5, "name"],
  ["uv", 536, 149, "note"],
  ["uvtexture3", 740, 112, "name"],
  ["uv", 740, 142, "note"],
  ["Geometry", 1012, 99, "context"],
  ["merge5", 536, 238, "name"],
  ["Transform", 536, 311, "type"],
  ["leaf_size", 536, 330, "name"],
  ["polyframe2", 536, 421, "name"],
  ["ull", 528, 512, "type"],
  ["eaf", 524.5, 532, "name"],
  ["object_merge3", 946, 221, "name"],
  ["../leaf_shape", 946, 252, "note"],
  ["scatter5", 944, 322, "name"],
  ["Attribute Randomize", 947, 377, "type"],
  ["random_size", 947, 397, "name"],
  ["pscale", 947, 440, "note"],
  ["Attribute Randomize", 947, 477, "type"],
  ["random_rotate", 947, 497, "name"],
  ["N", 947, 540, "note"],
  ["copytopoints6", 860, 618, "name"],
  ["object_merge2", 1142, 586, "name"],
  ["../leaf_outline", 1142, 615.5, "note"],
];

const Dot = ({ x, y }: { x: number; y: number }) => <circle cx={x} cy={y} r="4.600" fill="#b6b6b6" />;

const Stripes = ({ x, y, c, lean = 3 }: { x: number; y: number; c: string; lean?: number }) => (
  <path
    d={[11, 24, 65, 78].map((o) => `M${x + o + lean} ${y + 1}L${x + o} ${y + 27}`).join("")}
    stroke={c}
    strokeWidth="1"
    fill="none"
  />
);

const MergeNode = ({ x, y }: { x: number; y: number }) => (
  <g>
    <path d={`M${x + 2} ${y}h93q3 0 2 3l-9 23q-1 3-4 3H${x + 14}q-3 0-4-3L${x + 0.5} ${y + 3}q-1-3 2-3z`} fill="#cdcdcd" />
    <Stripes x={x + 2} y={y} c="#8b8b8b" />
    <g transform={`translate(${x + 38} ${y + 2})`}>
      <path d="M1 1h12v10H1z" fill="#c9ccce" stroke="#9ea3a5" strokeWidth=".8" /><path d="M1 1h12v2.500H1z" fill="#e8eaea" />
      <path d="M4.500 6.500h18v16h-18z" fill="#dfe5e6" stroke="#6b8496" strokeWidth="1.400" />
      <path d="M9 13l5-2 4 2v6l-4 3-5-3z" fill="#a4acaf" /><path d="M14 15l4-3v7l-4 3z" fill="#7b8489" />
      <path d="M10.500 4h4.500v3.500h3L12.700 13 8 7.500h2.500z" fill="#cb1410" /><path d="M10 5h4l2 2-4 1.500z" fill="#d9704c" opacity=".5" />
    </g>
  </g>
);

const RandomNode = ({ x, y }: { x: number; y: number }) => (
  <g>
    <path d={`M${x + 11} ${y}h83q3 0 2.500 3l-8 23q-1 3-4 3H${x + 3}q-3 0-2.500-3l7-23q1-3 3.500-3z`} fill="#7bd136" />
    <path
      d={[12, 25, 65, 78].map((o) => `M${x + o + 8} ${y + 1.500}L${x + o} ${y + 27.500}`).join("")}
      stroke="#559a24"
      fill="none"
    />
    <g transform={`translate(${x + 37} ${y + 1})`}>
      <path d="M5 1h17.500v13H12l-7 6-2-2 5-4H5z" fill="#dadad6" stroke="#9c9c98" strokeWidth=".8" />
      <path d="M7.500 3.500h12v8.500h-12z" fill="#e2e2e0" stroke="#666" strokeWidth=".9" />
      <path d="M9 5h2v1.500H9zM13 6h1.500v2H13zM16 4.500h2v2h-2zM15 9h2v1.500h-2zM10 8.500h2v2h-2z" fill="#444" />
      <circle cx="3.700" cy="20.500" r="3.200" fill="#555" /><circle cx="3.200" cy="19.800" r="1.300" fill="#ddd" />
    </g>
  </g>
);

const LockGlyph = ({ x, y }: { x: number; y: number }) => (
  <g>
    <path d={`M${x + 3} ${y + 6}v-2.500a2.700 2.700 0 015.400 0v2.500`} fill="none" stroke="#616e6a" strokeWidth="1.700" />
    <path d={`M${x} ${y + 5.500}h11.400v7.500H${x}z`} fill="#66736f" />
  </g>
);

const Fish = ({ x, y, s = 1 }: { x: number; y: number; s?: number }) => (
  <g transform={`translate(${x} ${y}) scale(${s})`}>
    <path d="M0 5.500h3L11 0l8 5.500h3-3L12 11 3 5.500z" fill="#a89c6a" stroke="#c5b348" strokeWidth=".8" />
    <path d="M5 5l6-3 6 3-5 3z" fill="#c6bf9e" /><path d="M3 5.500h16" stroke="#766f50" strokeWidth=".7" />
    {[[1, 5.500], [6, 3], [11, 1], [16, 4], [21, 5.500], [12, 10]].map(([a, b]) => <circle key={a} cx={a} cy={b} r="1.200" fill="#cdb74a" />)}
  </g>
);

const Graph = () => (
  <svg width="1044" height="604" viewBox="528 61 1044 604">
    <defs>
      <radialGradient id="halo"><stop offset=".5" stopColor="#242424" /><stop offset="1" stopColor="#191919" /></radialGradient>
      <clipPath id="ball"><circle cx="686.500" cy="105.500" r="10.500" /></clipPath>
    </defs>
    <circle cx="487" cy="415" r="125" fill="url(#halo)" />
    <g fill="none" stroke="#2c4769" strokeWidth="1.200">
      <path d="M685.500 61V84" /><path d="M685.500 127C685 140 678 152 664 154L528 183.500" />
      <path d="M889.500 413V470" />
      <path d="M528 573.500 772 577Q784 578 787 590" />
      <path d="M889 513Q888 525 878 533L836 569Q826 578 824 591" strokeDasharray="2 2" />
      <path d="M1085.500 601Q1085 615 1068 625L977 665" strokeDasharray="2 2" />
      <path d="M1085.500 601Q1090 620 1106 627L1193 648Q1208 652 1214 665" />
    </g>
    <path d="M889.500 237V295" stroke="#66664e" strokeDasharray="2 2" />
    <path d="M889.500 337V371" stroke="#5c6c42" />

    <path d="M529 350.500A78 78 0 01556 381L534 391.500 524 380z" fill="#030914" />
    <path d="M528 350A78 78 0 01555 381" fill="none" stroke="#4e4e4e" strokeWidth="3" />
    <path d="M529 479.500A78 78 0 00556 449L534 438.500 524 450z" fill="#0c060f" />
    <path d="M528 480A78 78 0 00555 449" fill="none" stroke="#4e4e4e" strokeWidth="3" />
    <path d="M524 366q7-9 14 0q-7 9-14 0z" fill="#0b1a30" stroke="#3f78b8" strokeWidth="1.300" /><circle cx="531" cy="366" r="3.700" fill="#5f9fe4" />
    <path d="M526 456h8v16h-8z" fill="#dcb8de" /><path d="M531 457v12" stroke="#74507a" strokeDasharray="1 1" /><path d="M534 456h2l2 4-4 1z" fill="#a871ad" />

    <rect x="640" y="92" width="91.500" height="28.500" rx="4" fill="#cbcbcb" />
    <Stripes x={640} y={92} c="#8b8b8b" />
    <circle cx="686.500" cy="105.500" r="11" fill="#15171a" />
    <g clipPath="url(#ball)">
      {[0, 1, 2, 3, 4].map((r) => [0, 1, 2, 3, 4].map((c) => ((r + c) % 2 ? <rect key={`${r}${c}`} x={675.500 + c * 4.500} y={94.500 + r * 4.500} width="4.500" height="4.500" fill="#dde1e3" /> : null)))}
    </g>
    <circle cx="686.500" cy="105.500" r="10.500" fill="none" stroke="#333" strokeWidth="1.200" />
    <Dot x={685.5} y={84.7} /><Dot x={685.5} y={127.3} />

    <MergeNode x={841} y={201} /><Dot x={889.7} y={236.7} />

    <rect x="843" y="301" width="93" height="30" rx="4.500" fill="#060606" stroke="#ffd400" strokeWidth="2" />
    <rect x="845" y="303" width="89" height="26" rx="3" fill="#7bd136" />
    <path d="M857 303.500l-2.500 25M870 303.500l-2.500 25M911.500 303.500l-2.500 25M924.500 303.500l-2.500 25" stroke="#559a24" />
    <Fish x={879.500} y={310.500} />
    <Dot x={889.5} y={294.7} /><Dot x={889.5} y={337.3} /><Dot x={889.3} y={370.3} />

    <RandomNode x={841} y={377.3} /><Dot x={889} y={413} /><LockGlyph x={951} y={406} />
    <Dot x={889} y={470.3} /><RandomNode x={841} y={477.3} /><Dot x={889} y={513} /><LockGlyph x={951} y={506} />

    <circle cx="805.500" cy="612" r="45.500" fill="#22334f" />
    <circle cx="805.500" cy="612" r="31" fill="#4a3763" />
    <path d="M805.500 633Q807 648 822 658Q830 661 884 665M772 577Q784 578 787 590" fill="none" stroke="#34557c" strokeWidth="1.200" />
    <path d="M836 569Q826 578 824 591" fill="none" stroke="#34557c" strokeWidth="1.200" strokeDasharray="2 2" />
    <rect x="760" y="597.500" width="91.500" height="29" rx="4" fill="#ffa61c" />
    <path d="M841 598.500h6.500q3 0 3 3v21q0 3-3 3H838z" fill="#00aef5" />
    <path d="M773.500 598.500l-3 27M786.500 598.500l-3 27M827.500 598.500l-3 27M840.500 598.500l-3 27" stroke="#a86a0c" />
    <g transform="translate(796 600)">
      <path d="M3 7l8-5 9 4v12l-8 5-9-5z" fill="#f3b75e" stroke="#d99a48" strokeWidth=".8" /><path d="M3 7l9 4 8-5M12 11v12" stroke="#d99a48" fill="none" />
      {[[3, 4], [12, 1.5], [20, 6], [9, 10], [2, 17], [13, 14], [20, 18], [10, 22]].map(([a, b]) => <circle key={`${a}-${b}`} cx={a} cy={b} r="1.600" fill="#ad7350" />)}
    </g>
    <Dot x={787} y={590.7} /><Dot x={824} y={590.7} /><Dot x={805.5} y={633.3} />

    <MergeNode x={1037} y={565.5} /><Dot x={1085.5} y={601} />
  </svg>
);

/* ---------- parameter panel ---------- */

const Panel = styled.div`
  position: absolute;
  left: 613px;
  top: 0;
  width: 431px;
  height: 496px;
  background: #3a3a3a;
  overflow: hidden;
`;

const OpHeader = styled.div`
  height: 27px;
  margin-left: 2px;
  padding-top: 3px;
  display: flex;
  align-items: center;
  border-bottom: 1px solid #0a0a0a;
`;

const OpName = styled.span`
  width: 49px;
  padding-left: 1px;
  margin-top: -2px;
  font-weight: 700;
  font-size: 11.500px;
  line-height: 18px;
  color: #d8d8d8;
`;

const field = css`
  background: #131313;
  border: 1px solid #242424;
  font-family: ${MONO};
  font-size: 11.640px;
  letter-spacing: 0;
  line-height: 20px;
  color: #dcdcdc;
`;

const OpField = styled.div`
  ${field}
  flex: 1;
  height: 22px;
  padding-left: 2px;
  line-height: 18px;
`;

const AssetRow = styled.div`
  height: 27px;
  margin-left: 2px;
  display: flex;
  align-items: center;
  border-bottom: 1px solid #0a0a0a;
`;

const AssetLabel = styled.span`
  width: 129px;
  padding-left: 1px;
  line-height: 18px;
`;

const Select = styled.div<{ $w: number; $pl: number }>`
  width: ${(p) => p.$w}px;
  height: 22px;
  padding-left: ${(p) => p.$pl}px;
  display: flex;
  align-items: center;
  justify-content: space-between;
  background: linear-gradient(#5a5a5a, #3f3f3f);
  border: 1px solid #222;
  border-bottom: 2px solid #1c1c1c;
  line-height: 18px;
  white-space: nowrap;
`;

const Spin = styled.div`
  width: 22px;
  height: 19px;
  background: linear-gradient(#3e3e3e, #2a2a2a);
  display: flex;
  flex-direction: column;
  align-items: center;
  justify-content: center;
`;

const TabsRow = styled.div`
  height: 23px;
  margin-left: 2px;
  display: flex;
  border-bottom: 1px solid #606060;
`;

const ParamTab = styled.div<{ $w: number; $on?: boolean }>`
  width: ${(p) => p.$w}px;
  height: 22px;
  border: 1px solid #1f1f1f;
  border-bottom-width: ${(p) => (p.$on ? 0 : 1)}px;
  border-right-width: ${(p) => (p.$on ? 0 : 1)}px;
  background: ${(p) => (p.$on ? "linear-gradient(#5c5c5c, #484848)" : "linear-gradient(#4c4c4c, #323232)")};
  font-weight: ${(p) => (p.$on ? 700 : 400)};
  color: ${(p) => (p.$on ? "#dedede" : "#c4c4c4")};
  line-height: 21px;
  text-align: center;
  white-space: nowrap;
`;

const TabBody = styled.div`
  margin-left: 2px;
  padding-top: 4px;
  height: 348px;
  background: #3e3e3e;
`;

const ParamRow = styled.div<{ $h?: number; $dim?: boolean }>`
  height: ${(p) => p.$h ?? 25}px;
  display: grid;
  grid-template-columns: 17px 14px 106px 15px 1fr;
  align-items: center;
  padding-bottom: 2px;
  color: ${(p) => (p.$dim ? "#757575" : "#c4c4c4")};
`;

const RowLabel = styled.span`
  text-align: right;
  line-height: 18px;
  white-space: nowrap;
`;

const Controls = styled.div`
  grid-column: 5;
  display: flex;
  align-items: center;
`;

const Check = styled.span<{ $off?: boolean }>`
  width: 14px;
  height: 14px;
  flex: none;
  background: ${(p) => (p.$off ? "#353535" : "#131313")};
  border: 1px solid ${(p) => (p.$off ? "#303030" : "#262626")};
  display: grid;
  place-items: center;
`;

const Tick = () => (
  <svg width="12" height="12" viewBox="0 0 12 12"><path d="M1 5.500l3 .2 1 2L9 1.200l2.700-.4L5.800 11.300H4z" fill="#e4e4e4" /></svg>
);

const NumField = styled.div<{ $tone?: "key" | "dim"; $wide?: boolean }>`
  ${field}
  width: ${(p) => (p.$wide ? "290px" : "74px")};
  height: 23px;
  flex: none;
  padding-left: 3px;
  line-height: 20px;
  ${(p) => p.$tone === "key" && css`background: #223521; color: #fff;`}
  ${(p) => p.$tone === "dim" && css`background: #323232; border-color: #2c2c2c; color: #4e4e4e;`}
  font-weight: ${(p) => (p.$tone === "key" || (p.$tone === "dim" && !p.$wide) ? 700 : 400)};
`;

const SliderBox = styled.div<{ $dim?: boolean }>`
  position: relative;
  width: 206px;
  height: 21px;
  margin-left: 3px;
  opacity: ${(p) => (p.$dim ? 0.2 : 1)};
`;

const Track = styled.div<{ $fill: number; $dim?: boolean }>`
  height: 6px;
  margin: 8px 0 0 2px;
  border-top: 1px solid #000;
  border-bottom: 1px solid #000;
  border-left: 1px solid #000;
  background: ${(p) =>
    p.$dim
      ? "#111"
      : `linear-gradient(#505050 1px, transparent 1px), linear-gradient(90deg, #0c509f ${p.$fill}px, #000 ${p.$fill}px)`};
`;

const Thumb = styled.div`
  position: absolute;
  top: 0;
  width: 6px;
  height: 21px;
  background: linear-gradient(90deg, #b0b0b0, #787878);
  border: 1px solid #1a1a1a;
`;

const logTicks = (decade: number) => {
  const out: number[] = [];
  for (let d = 0; d < 3; d++) for (let i = 1; i < 10; i++) out.push(decade * (d + Math.log10(i)));
  return out;
};

const LINEAR = Array.from({ length: 11 }, (_, i) => i * 18.2);

const Slider = ({ fill, ticks, dim, thumb = true }: { fill: number; ticks?: number[]; dim?: boolean; thumb?: boolean }) => (
  <SliderBox $dim={dim}>
    <Track $fill={fill} $dim={dim} />
    {ticks && (
      <svg width="206" height="3">
        <path d={ticks.map((t) => `M${Math.round(t) + 2.500} 0v2`).join("")} stroke="#a2a2a2" />
      </svg>
    )}
    {thumb && <Thumb style={{ left: fill - 1 }} />}
  </SliderBox>
);

interface Param {
  label?: string;
  check?: boolean;
  value?: string;
  tone?: "key" | "dim";
  wide?: boolean;
  dim?: boolean;
  toggle?: [string, boolean];
  slider?: { fill: number; ticks?: number[]; thumb?: boolean };
}

const PARAMS: Param[] = [
  { label: "Force Total Count", check: true, value: "500", tone: "key", slider: { fill: 196, ticks: logTicks(73) } },
  { label: "Density Scale", value: "0.216095", tone: "dim", dim: true, slider: { fill: 24, ticks: logTicks(73) } },
  { label: "Density Attribute", check: false, value: "density", tone: "dim", dim: true, wide: true },
  { label: "Override Prim Area", check: false, value: "area", tone: "dim", dim: true, wide: true },
  { toggle: ["Use Area for 2D Volumes", false], dim: true },
  { label: "Max Point Limit", check: true, value: "1000000", slider: { fill: 206, ticks: logTicks(91), thumb: false } },
  { label: "Global Seed", value: "0", tone: "key", slider: { fill: 0 } },
  { label: "Primitive Seed Attr…", check: false, value: "primid", tone: "dim", dim: true, wide: true },
  { toggle: ["Randomize Point Order", true] },
  { label: "Relax Iterations", check: true, value: "10", slider: { fill: 36, ticks: LINEAR } },
  { label: "Scale Radii By", value: "1", slider: { fill: 182 } },
  { label: "Max Relax Radius", check: true, value: "10", slider: { fill: 36 } },
];

const ToggleText = styled.span`
  padding-left: 7px;
  line-height: 16px;
  white-space: nowrap;
`;

const ParamLine = ({ p }: { p: Param }) =>
  p.toggle ? (
    <ParamRow $h={21} $dim={p.dim}>
      <Controls><Check $off={p.dim}>{p.toggle[1] && <Tick />}</Check><ToggleText>{p.toggle[0]}</ToggleText></Controls>
    </ParamRow>
  ) : (
    <ParamRow $dim={p.dim}>
      <span />
      {p.check === undefined ? <span /> : <Check>{p.check && <Tick />}</Check>}
      <RowLabel>{p.label}</RowLabel>
      <Controls>
        <NumField $tone={p.tone} $wide={p.wide}>{p.value}</NumField>
        {p.slider && <Slider {...p.slider} dim={p.dim} />}
      </Controls>
    </ParamRow>
  );

const GroupRow = styled.div`
  height: 31px;
  margin-left: 2px;
  padding-top: 3px;
  display: grid;
  grid-template-columns: 137px 15px 1fr;
  align-items: center;
`;

const SpinArrows = () => <Spin><Tri dir="up" s={7} /><Tri s={7} /></Spin>;

const Parameters = () => (
  <Panel>
    <OpHeader>
      <IconSlot $w={25}>
        <svg width="17" height="11" viewBox="0 0 22 12"><Fish x={0} y={0} /></svg>
        <Corner $x={3} $y={0}><Tri s={7} /></Corner>
      </IconSlot>
      <OpName>Scatter</OpName>
      <OpField>scatter5</OpField>
    </OpHeader>
    <AssetRow>
      <AssetLabel>Asset Name</AssetLabel>
      <Select $w={104} $pl={14}>scatter::2.0<SpinArrows /></Select>
    </AssetRow>
    <GroupRow>
      <RowLabel>Group</RowLabel>
      <span />
      <NumField $wide />
    </GroupRow>
    <TabsRow>
      <ParamTab $w={56} $on>Options</ParamTab>
      <ParamTab $w={103}>Output Attributes</ParamTab>
    </TabsRow>
    <TabBody>
      <ParamRow $h={26}>
        <span /><span />
        <RowLabel>Generate</RowLabel>
        <Controls><Select $w={145} $pl={14}>By Density<SpinArrows /></Select></Controls>
      </ParamRow>
      <ParamRow $h={21}>
        <Controls><Check /><ToggleText>Scatter on Voxels Independently</ToggleText></Controls>
      </ParamRow>
      {PARAMS.map((p, i) => <ParamLine key={i} p={p} />)}
    </TabBody>
  </Panel>
);

const MENUS: [string, number][] = [["Add", 36], ["Edit", 36], ["Go", 30], ["View", 40.5], ["Tools", 43.5], ["Layout", 50], ["Labs", 37.5], ["Help", 40]];

const Crumb = styled.div<{ $w: number; $pl: number; $gap: number }>`
  width: ${(p) => p.$w}px;
  display: flex;
  align-items: center;
  padding-left: ${(p) => p.$pl}px;
  gap: ${(p) => p.$gap}px;
  flex: none;
`;

const Right = () => (
  <RightPane>
    <TabStrip $from={149} />
    <PathBar>
      <IconSlot $ml={1}>
        <svg width="15" height="13" viewBox="0 0 17 14"><path d="M0 7l8-7v3.500h7v6H8V14z" fill="#d8d8d4" /></svg>
        <Corner $x={-1} $y={1}><Tri dir="right" s={7} /></Corner>
      </IconSlot>
      <IconSlot>
        <svg width="14" height="12" viewBox="0 0 14 12"><path d="M14 6L8 0v3.500H0v5h8V12z" fill="#606060" /></svg>
        <Corner $x={-1} $y={1}><Tri dir="right" s={6} c="#555" /></Corner>
      </IconSlot>
      <IconSlot $w={5} />
      <PathField $open>
        <Crumb $w={49} $pl={6} $gap={5}>
          <svg width="16" height="16" viewBox="0 0 16 16">
            <path d="M0 3l15-3v3L1 6z" fill="#858c8c" /><path d="M3 2.500l2 2.500M7 1.700l2 2.500M11 1l2 2.500" stroke="#333" strokeWidth="1.500" />
            <path d="M1 6h14v10H1z" fill="#5f6767" /><path d="M1 6h14v2H1z" fill="#848b8b" /><path d="M3 10.500h4v3H3zM9 10h4v4H9z" fill="#b9bdbd" />
          </svg>
          <PathText>obj</PathText>
        </Crumb>
        <Chevron />
        <Crumb $w={56} $pl={5} $gap={5}>
          <svg width="17" height="15" viewBox="0 0 17 15">
            <rect x="0" y="1" width="7" height="11" rx="2" fill="#7ba2cc" /><circle cx="12.500" cy="7" r="4.500" fill="#cf3a2c" /><path d="M8.500 5l4 9.500h-8z" fill="#f2d93a" />
          </svg>
          <PathText>geo1</PathText>
        </Crumb>
        <Chevron />
        <Crumb $w={120} $pl={6} $gap={5}><BoxIcon /><PathText>ciel_tree_stylized</PathText></Crumb>
      </PathField>
    </PathBar>
    <MenuBar>
      <MenuHandle><Tri dir="up" c="#050505" s={8} /></MenuHandle>
      <Row $pl={8}>
        {MENUS.map(([m, w]) => <MenuItem key={m} $w={w}>{m}</MenuItem>)}
      </Row>
      <MenuTools>
        <IconSlot>
          <svg width="16" height="16" viewBox="0 0 16 16"><path d="M2.500 13.500L12 4M4 4l8 8" stroke="#c4c4c4" strokeWidth="1.800" /><path d="M0 2l3-1 3 3-1.500 2-3-1zM11.500 1l2.500-.5-1.500 2.500 1 1 2.500-1-1 3-4 0z" fill="#cfcfcf" /><path d="M10.500 12l2-2 3 4-1.500 1.500zM.5 13.500l3-2 1 1-2 3z" fill="#dcdcdc" /></svg>
        </IconSlot>
        <IconSlot>
          <svg width="12" height="15" viewBox="0 0 12 15"><path d="M0 0h4v3H0z" fill="#ddd" /><path d="M2 3v11h4M2 6h4M2 10h4" fill="none" stroke="#999" /><path d="M6 4h5v3H6zM6 8h5v3H6zM6 12h5v3H6z" fill="#a7ada6" /></svg>
        </IconSlot>
        <IconSlot>
          <svg width="13" height="15"><path d="M0 0h13v15H0z" fill="#e9e9e4" /><path d="M0 3h13v2.500H0zM0 8h13v2.500H0zM0 13h13v2H0z" fill="#b9b9b2" /></svg>
        </IconSlot>
        <IconSlot $ml={16}>
          <svg width="13" height="13" viewBox="0 0 13 13">
            <path d="M0 0h13v13H0z" fill="#ececec" />
            {["#b80f0f", "#e0661a", "#e0b21a", "#1d3f8a", "#5fa52b", "#6d93c4", "#111", "#8f8f8f", "#d0d0c8"].map((c, i) => <rect key={c} x={1 + (i % 3) * 4} y={1 + Math.floor(i / 3) * 4} width="3" height="3" fill={c} />)}
          </svg>
        </IconSlot>
        <IconSlot>
          <svg width="14" height="14" viewBox="0 0 14 14"><rect x=".5" y=".5" width="13" height="13" fill="#333" stroke="#b8b8b8" /><path d="M2.500 4h4M8 4h4M2.500 7h4M8 7h4M2.500 10h4M8 10h4" stroke="#c8c8c8" strokeWidth="1.500" /></svg>
        </IconSlot>
      </MenuTools>
    </MenuBar>
    <Network>
      <Graph />
      <Backdrop />
      {LABELS.map(([t, x, b, k], i) => (
        <Label key={i} $x={x} $base={b} $kind={k} $bright={t === "polyframe2"}>{t}</Label>
      ))}
      <Parameters />
    </Network>
  </RightPane>
);

export default function App() {
  return (
    <>
      <GlobalStyle />
      <Window>
        <Left />
        <SplitV><Tri dir="left" s={6} /><Grip $w={5} $h={21} /><Tri dir="right" s={6} /></SplitV>
        <Right />
      </Window>
    </>
  );
}
